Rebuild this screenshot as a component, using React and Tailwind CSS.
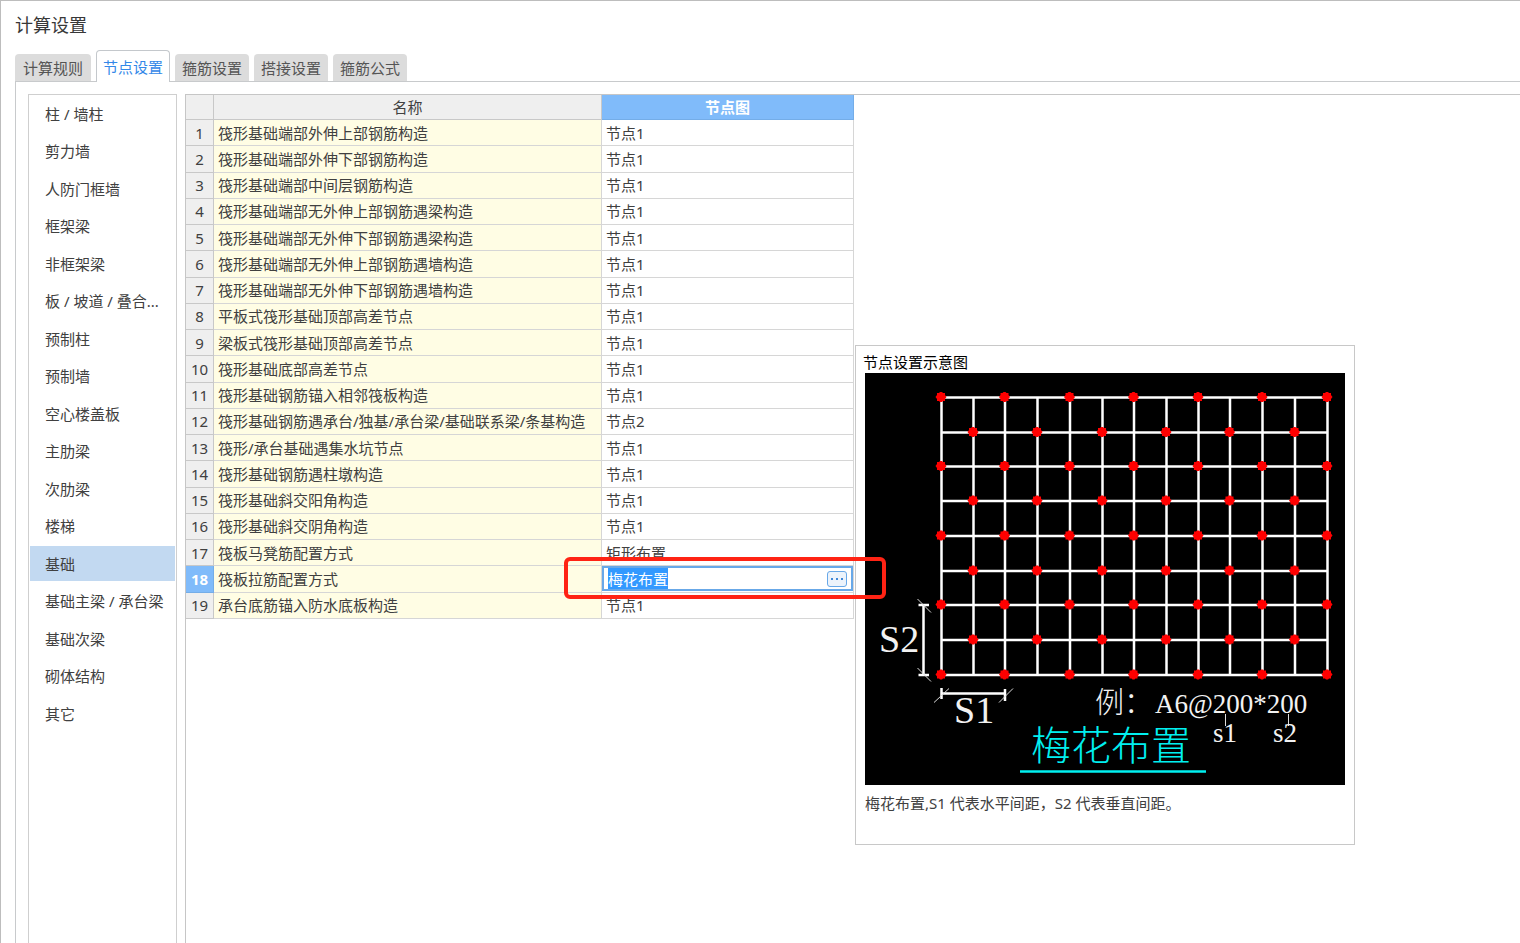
import React, { useEffect, useRef, useState } from 'react';

const TABS = ['计算规则', '节点设置', '箍筋设置', '搭接设置', '箍筋公式'];

const CATEGORIES = [
  '柱 / 墙柱',
  '剪力墙',
  '人防门框墙',
  '框架梁',
  '非框架梁',
  '板 / 坡道 / 叠合...',
  '预制柱',
  '预制墙',
  '空心楼盖板',
  '主肋梁',
  '次肋梁',
  '楼梯',
  '基础',
  '基础主梁 / 承台梁',
  '基础次梁',
  '砌体结构',
  '其它',
];

const ROWS = [
  ['筏形基础端部外伸上部钢筋构造', '节点1'],
  ['筏形基础端部外伸下部钢筋构造', '节点1'],
  ['筏形基础端部中间层钢筋构造', '节点1'],
  ['筏形基础端部无外伸上部钢筋遇梁构造', '节点1'],
  ['筏形基础端部无外伸下部钢筋遇梁构造', '节点1'],
  ['筏形基础端部无外伸上部钢筋遇墙构造', '节点1'],
  ['筏形基础端部无外伸下部钢筋遇墙构造', '节点1'],
  ['平板式筏形基础顶部高差节点', '节点1'],
  ['梁板式筏形基础顶部高差节点', '节点1'],
  ['筏形基础底部高差节点', '节点1'],
  ['筏形基础钢筋锚入相邻筏板构造', '节点1'],
  ['筏形基础钢筋遇承台/独基/承台梁/基础联系梁/条基构造', '节点2'],
  ['筏形/承台基础遇集水坑节点', '节点1'],
  ['筏形基础钢筋遇柱墩构造', '节点1'],
  ['筏形基础斜交阳角构造', '节点1'],
  ['筏形基础斜交阴角构造', '节点1'],
  ['筏板马凳筋配置方式', '矩形布置'],
  ['筏板拉筋配置方式', '梅花布置'],
  ['承台底筋锚入防水底板构造', '节点1'],
];

const EDITING = 17;

export default function App() {
  const [tab, setTab] = useState('节点设置');
  const [category, setCategory] = useState('基础');

  return (
    <div className="flex min-h-screen flex-col overflow-hidden border-l border-t border-[#bdbdbd] bg-white pl-3.5 font-['Noto_Sans','Noto_Sans_CJK_SC',sans-serif] text-[15px] leading-5 text-[#404040]">
      <h1 className="mt-3 text-lg leading-6 text-[#383838]">计算设置</h1>

      <div role="tablist" className="mt-[13px] flex items-end gap-[5px]">
        {TABS.map((name, i) => (
          <button
            key={name}
            type="button"
            role="tab"
            aria-selected={tab === name}
            onClick={() => setTab(name)}
            className={cn(
              'whitespace-nowrap rounded-t',
              tab === name
                ? 'relative -mb-px h-8 border border-b-0 border-[#c4c8cc] bg-white px-1.5 text-[#3388e8]'
                : 'h-[27px] bg-[#dcdcdc] text-[#555]',
              tab !== name && (i === 0 ? 'px-2' : 'px-[7px]')
            )}
          >
            {name}
          </button>
        ))}
      </div>

      <div className="flex flex-1 gap-2 border-l border-t border-[#c8cacc] pl-3 pt-3">
        <Sidebar selected={category} onSelect={setCategory} />

        <main className="flex min-w-0 flex-1 items-start border-l border-t border-[#c6c6c6]">
          <NodeTable />
          <Preview />
        </main>
      </div>
    </div>
  );
}

function Sidebar({ selected, onSelect }) {
  return (
    <nav className="w-[149px] shrink-0 border border-b-0 border-[#cfcfcf] px-px pt-px">
      <ul className="flex h-[635px] flex-col justify-between">
        {CATEGORIES.map((name) => (
          <li key={name}>
            <button
              type="button"
              onClick={() => onSelect(name)}
              className={cn(
                'block h-[35px] w-full whitespace-nowrap pl-[15px] text-left',
                selected === name && 'bg-[#c2d9f1]'
              )}
            >
              {name}
            </button>
          </li>
        ))}
      </ul>
    </nav>
  );
}

function NodeTable() {
  return (
    <table className="h-[524px] w-[668px] shrink-0 table-fixed border-separate border-spacing-0">
      <colgroup>
        <col className="w-[28px]" />
        <col />
        <col className="w-[252px]" />
      </colgroup>
      <thead>
        <tr className="h-[25px]">
          <th className="border-b border-r border-[#c8c8c8] bg-[#efefef] p-0" aria-label="序号" />
          <th className="border-b border-r border-[#c8c8c8] bg-[#efefef] p-0 font-normal">名称</th>
          <th className="border-b border-r border-[#74ade8] bg-[#80bbfa] p-0 font-bold text-white">节点图</th>
        </tr>
      </thead>
      <tbody>
        {ROWS.map(([name, node], i) => (
          <tr key={name} className="h-[26px]">
            <th
              scope="row"
              className={cn(
                'border-b border-r p-0',
                i === EDITING
                  ? 'border-[#74ade8] bg-[#80bbfa] font-bold text-white'
                  : 'border-[#c8c8c8] bg-[#efefef] font-normal'
              )}
            >
              {i + 1}
            </th>
            <td className="whitespace-nowrap border-b border-r border-[#d6d6d6] bg-[#fffde4] py-0 pl-1 pr-0">{name}</td>
            {i === EDITING ? (
              <td className="relative border-b border-r border-[#d6d6d6] p-0">
                <NodeEditor label={name} value={node} />
              </td>
            ) : (
              <td className="border-b border-r border-[#d6d6d6] py-0 pl-1 pr-0">{node}</td>
            )}
          </tr>
        ))}
      </tbody>
    </table>
  );
}

function NodeEditor({ label, value }) {
  const input = useRef(null);

  useEffect(() => {
    input.current.focus();
    input.current.select();
  }, []);

  return (
    <>
      <div className="flex h-[25px] items-center border-2 border-[#68a8e8] bg-white px-1">
        <input
          ref={input}
          type="text"
          aria-label={label}
          defaultValue={value}
          className="h-[21px] min-w-0 flex-1 leading-5 outline-none selection:bg-[#3399ff] selection:text-white"
        />
        <button
          type="button"
          aria-label="更多"
          className="flex h-4 w-5 items-center justify-center rounded-[3px] border border-[#68a8e8] bg-[#ecf3fb]"
        >
          <svg viewBox="0 0 14 4" className="h-1 w-3.5" fill="#3f87d8">
            <rect x="1" y="1" width="2" height="2" />
            <rect x="6" y="1" width="2" height="2" />
            <rect x="11" y="1" width="2" height="2" />
          </svg>
        </button>
      </div>
      {/* red marker around the active cell */}
      <div className="pointer-events-none absolute -bottom-[7px] -left-[38px] -right-[33px] -top-[9px] z-10 rounded-md border-4 border-[#ff2314]" />
    </>
  );
}

function Preview() {
  return (
    <section className="mt-[250px] ml-px h-[500px] w-[500px] shrink-0 border border-[#c8c8c8] bg-white">
      <h2 className="pl-[7px] pt-1.5 leading-[21px] text-black">节点设置示意图</h2>
      <div className="pl-[9px]">
        <Diagram />
        <p className="mt-2 leading-5">梅花布置,S1 代表水平间距，S2 代表垂直间距。</p>
      </div>
    </section>
  );
}

const GRID_X = [76.5, 108.5, 140, 172.5, 205, 237.5, 269, 301.5, 333.5, 365, 397.5, 430, 462.5];
const GRID_Y = [24.5, 59.5, 93.5, 128, 163, 198, 232, 267, 302];

function Diagram() {
  return (
    <svg viewBox="0 0 480 412" className="block h-[412px] w-[480px] bg-black" role="img" aria-label="梅花布置">
      <g stroke="#fff" strokeWidth="2.5">
        {GRID_X.map((x) => (
          <line key={x} x1={x} x2={x} y1="24" y2="303" />
        ))}
        {GRID_Y.map((y) => (
          <line key={y} x1="76" x2="463" y1={y} y2={y} />
        ))}
      </g>

      {/* staggered bars: every other crossing */}
      <g fill="#f00">
        {GRID_Y.map((y, r) =>
          GRID_X.map((x, c) =>
            (r + c) % 2 === 0 ? (
              <path
                key={`${r}-${c}`}
                transform={`translate(${x - 0.5} ${y - 0.5})`}
                d="M-1-5H1L2-4H4V-2L5.5 0L4 2V4H2L1 5H-1L-2 4H-4V2L-5.5 0L-4-2V-4H-2Z"
              />
            ) : null
          )
        )}
      </g>

      {/* dimension lines */}
      <g stroke="#fff" strokeWidth="2.5" fill="none">
        <path d="M58.5 232V302M53.5 232H64M53.5 302H64" />
        <path d="M76.5 320.5H140M76.5 315V326M140 316V328" />
      </g>
      <g stroke="#ddd" strokeWidth="1" fill="none">
        <path d="M52.5 226L66 239.5M52.5 295L66 308.5" />
        <path d="M69 329.5L84 315.5M134 329.5L148 315.5" />
        <path d="M360.5 341V353M423.5 341V353" />
      </g>

      <g fill="#f2f2f2" className="font-['Liberation_Serif','Noto_Sans_CJK_SC',serif] font-light">
        <text x="14" y="279" fontSize="38">S2</text>
        <text x="89" y="350" fontSize="38">S1</text>
        <text x="230" y="340" fontSize="29">例：</text>
        <text x="290" y="340" fontSize="27">A6@200*200</text>
        <text x="348" y="369" fontSize="27">s1</text>
        <text x="408" y="369" fontSize="27">s2</text>
        <text x="166" y="387" fontSize="40" fill="#00f0f0">梅花布置</text>
      </g>
      <path d="M155 398.5H341" stroke="#00f0f0" strokeWidth="2.5" />
    </svg>
  );
}

function cn(...classes) {
  return classes.filter(Boolean).join(' ');
}
